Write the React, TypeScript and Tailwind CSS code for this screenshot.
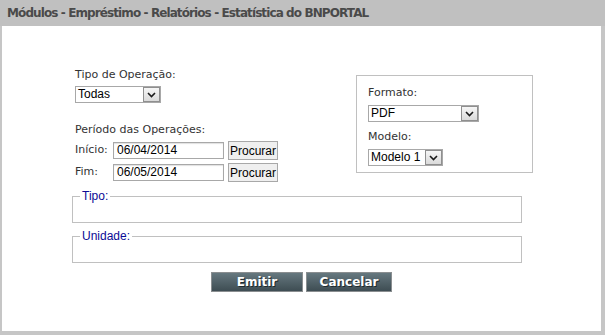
import React from "react";

const Chevron = () => (
  <svg width="9" height="6" viewBox="0 0 9 6" fill="none">
    <path d="M1 1l3.5 3.5L8 1" stroke="#1a1a1a" strokeWidth="1.6" />
  </svg>
);

const FakeSelect = ({ value, width }: { value: string; width: string }) => (
  <div className={`flex h-[17px] ${width} items-stretch border border-[#a8a8a8] bg-white`}>
    <span className="flex-1 overflow-hidden whitespace-nowrap pl-[2px] text-[12px] leading-[15px] text-black [font-family:'Liberation_Sans',Arial,sans-serif]">
      {value}
    </span>
    <span className="flex w-[17px] items-center justify-center border border-[#8f8f8f] bg-gradient-to-b from-[#f6f6f6] to-[#dadada]">
      <Chevron />
    </span>
  </div>
);

const DateRow = ({ label, value }: { label: string; value: string }) => (
  <div className="flex h-[19px] items-center">
    <span className="w-[38px] text-[11px] text-[#333]">{label}</span>
    <div className="h-[17px] w-[111px] border border-[#a8a8a8] bg-white pl-[3px] text-[12px] leading-[15px] text-black shadow-[inset_0_1px_1px_#e0e0e0] [font-family:'Liberation_Sans',Arial,sans-serif]">
      {value}
    </div>
    <button className="ml-[4px] h-[19px] w-[50px] border border-[#a8a8a8] bg-[#efefef] text-[12px] leading-[16px] text-black [font-family:'Liberation_Sans',Arial,sans-serif]">
      Procurar
    </button>
  </div>
);

const Group = ({ legend }: { legend: string }) => (
  <fieldset className="h-[34px] border border-[#c0c0c0] px-[7px]">
    <legend className="px-[2px] text-[12px] leading-[14px] text-[#0b0b96] [font-family:'Liberation_Sans',Arial,sans-serif]">
      {legend}
    </legend>
  </fieldset>
);

const ActionButton = ({ label, width }: { label: string; width: string }) => (
  <button
    className={`h-[20px] ${width} border border-[#8a8e90] bg-gradient-to-b from-[#66787f] to-[#3e4d53] text-[12px] font-bold leading-[17px] text-white [text-shadow:1px_1px_0_#1e2a2e]`}
  >
    {label}
  </button>
);

export default function App() {
  return (
    <div className="flex h-[335px] w-[605px] flex-col bg-[#c6c6c6] pb-[4px] pl-[2px] pr-[4px] [font-family:'DejaVu_Sans',Verdana,sans-serif]">
      <div className="-ml-[2px] -mr-[4px] flex h-[26px] items-center bg-[#c0c0c0] pl-[7px]">
        <h1 className="text-[12px] font-bold tracking-[-0.9px] text-[#4a4a4a]">
          Módulos - Empréstimo - Relatórios - Estatística do BNPORTAL
        </h1>
      </div>

      <div className="flex flex-1 flex-col bg-white">
        <div className="flex pl-[73px] pt-[42px]">
          <div className="flex w-[281px] flex-col">
            <span className="text-[11px] leading-[13px] text-[#333]">Tipo de Operação:</span>
            <div className="mt-[5px]">
              <FakeSelect value="Todas" width="w-[86px]" />
            </div>
            <span className="mt-[20px] text-[11px] leading-[13px] text-[#333]">Período das Operações:</span>
            <div className="mt-[5px] flex flex-col gap-[3px]">
              <DateRow label="Início:" value="06/04/2014" />
              <DateRow label="Fim:" value="06/05/2014" />
            </div>
          </div>

          <div className="mt-[7px] flex h-[98px] w-[177px] flex-col border border-[#c0c0c0] pl-[11px] pt-[10px]">
            <span className="text-[11px] leading-[13px] text-[#333]">Formato:</span>
            <div className="mt-[6px]">
              <FakeSelect value="PDF" width="w-[111px]" />
            </div>
            <span className="mt-[8px] text-[11px] leading-[13px] text-[#333]">Modelo:</span>
            <div className="mt-[6px]">
              <FakeSelect value="Modelo 1" width="w-[75px]" />
            </div>
          </div>
        </div>

        <div className="ml-[70px] mt-[7px] flex w-[450px] flex-col gap-[6px]">
          <Group legend="Tipo:" />
          <Group legend="Unidade:" />
        </div>

        <div className="mt-[9px] flex justify-center gap-[3px]">
          <ActionButton label="Emitir" width="w-[92px]" />
          <ActionButton label="Cancelar" width="w-[86px]" />
        </div>
      </div>
    </div>
  );
}
